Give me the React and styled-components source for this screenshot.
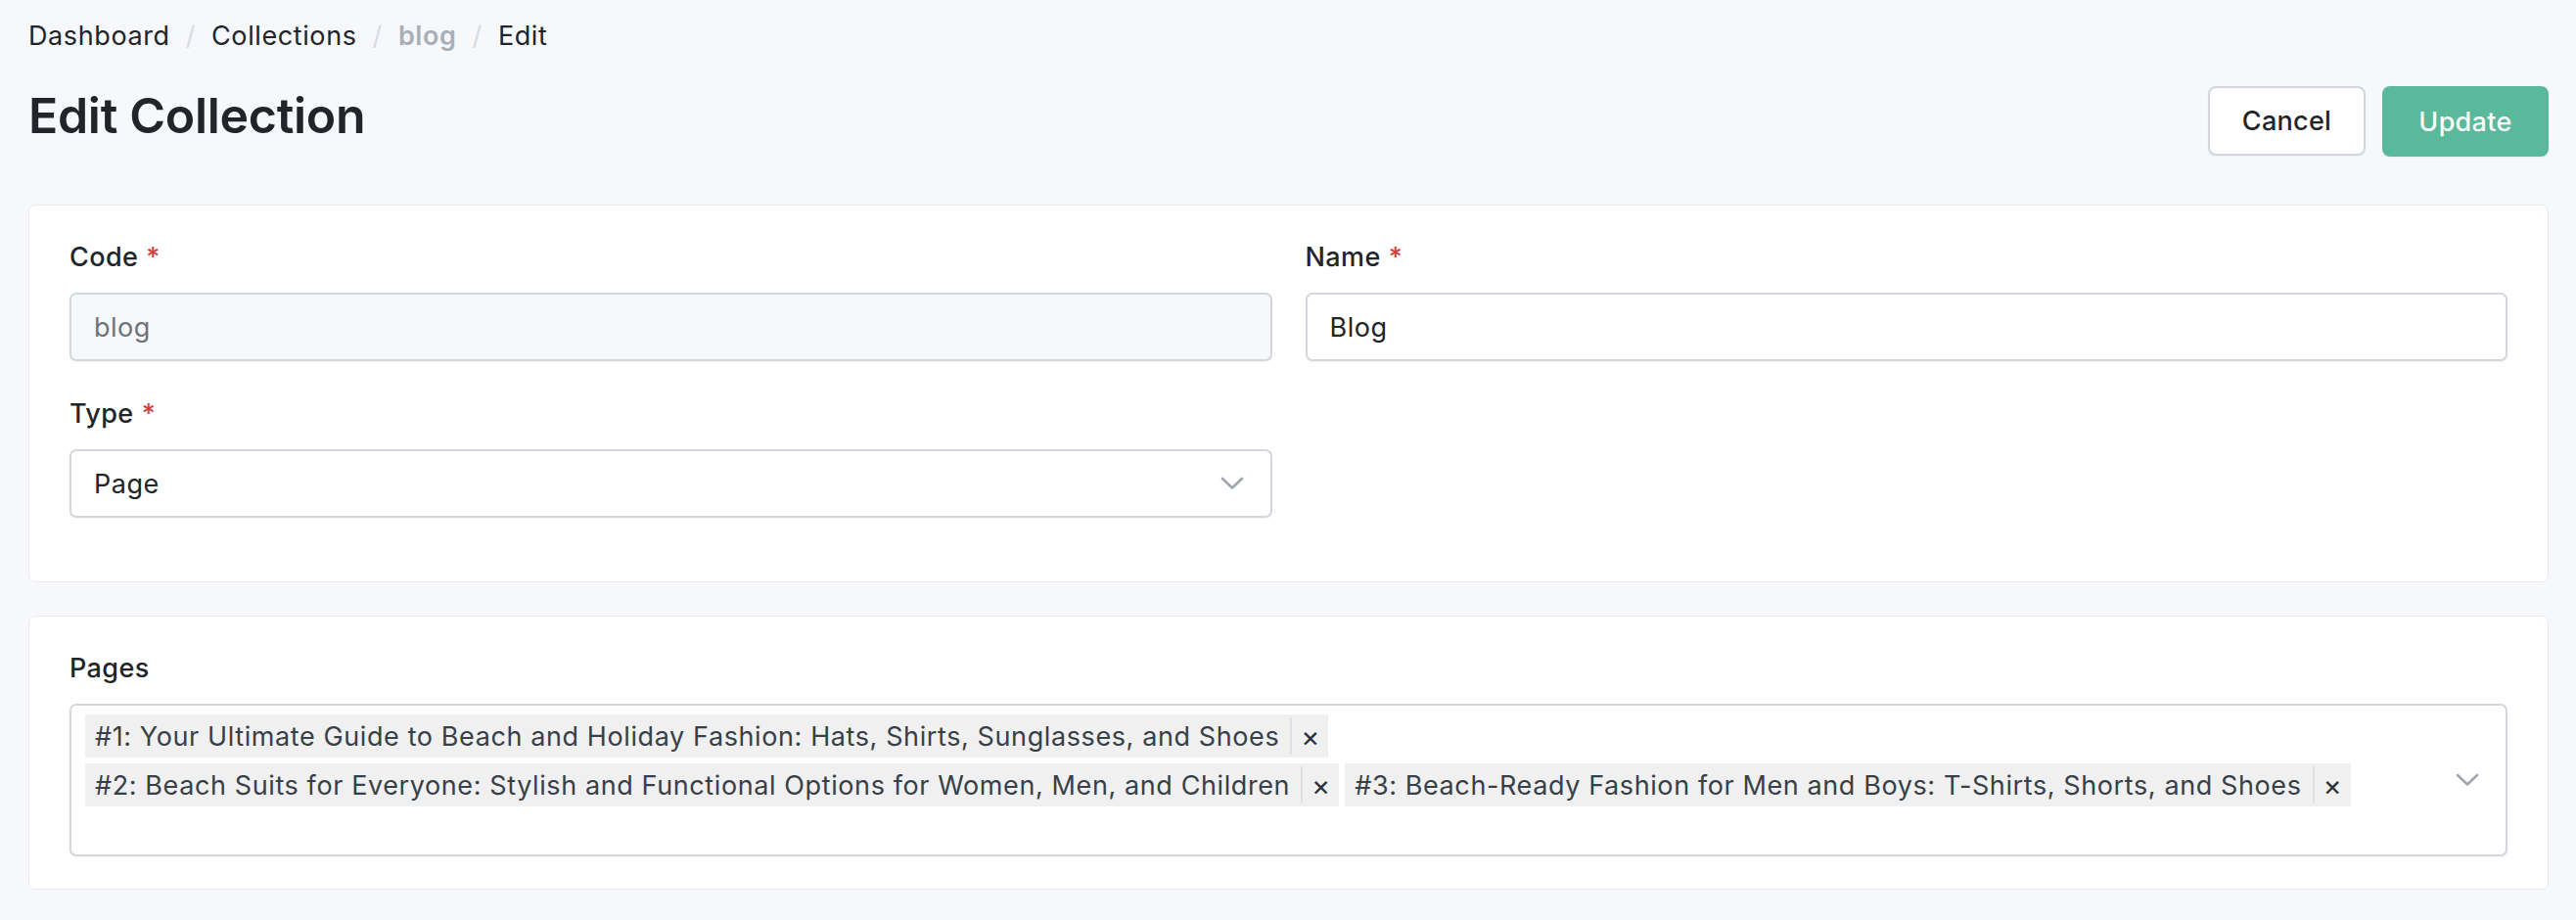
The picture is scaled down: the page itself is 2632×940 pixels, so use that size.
import React from 'react';
import styled, { createGlobalStyle } from 'styled-components';

const GlobalStyle = createGlobalStyle`
	* {
		box-sizing: border-box;
	}
	body {
		margin: 0;
		background: #f7f8fb;
		font-family: Inter, 'Noto Sans', sans-serif;
		color: #212529;
	}
`;

const Page = styled.main`
	padding: 20px 28px 31px 29px;
	min-height: 940px;
`;

const Breadcrumb = styled.nav`
	display: flex;
	align-items: center;
	font-size: 27px;
	line-height: 33px;
	letter-spacing: 0.6px;
`;

const Crumb = styled.span`
	color: ${(props) => (props.$muted ? '#a8afb8' : '#212529')};
	font-weight: ${(props) => (props.$muted ? 600 : 400)};
`;

const Slash = styled.span`
	color: #d8dce1;
	margin: 0 16px;
`;

const Header = styled.header`
	display: flex;
	justify-content: space-between;
	align-items: flex-start;
	margin-top: 35px;
	margin-bottom: 49px;
`;

const Title = styled.h1`
	margin: 0;
	font-size: 50px;
	line-height: 60px;
	font-weight: 600;
	color: #212529;
	letter-spacing: -0.3px;
`;

const Actions = styled.div`
	display: flex;
	gap: 17px;
	align-items: flex-start;
`;

const Button = styled.button`
	height: ${(props) => (props.$primary ? '72px' : '71px')};
	min-width: ${(props) => (props.$primary ? '170px' : '161px')};
	padding: 0 28px;
	border-radius: 8px;
	font-family: inherit;
	font-size: 27px;
	font-weight: 500;
	letter-spacing: 0.3px;
	cursor: pointer;
	border: ${(props) => (props.$primary ? 'none' : '2px solid #d3d7dd')};
	background: ${(props) => (props.$primary ? '#5ab89b' : '#fff')};
	color: ${(props) => (props.$primary ? '#f7fcfa' : '#212529')};
	box-shadow: 0 1px 2px rgba(0, 0, 0, 0.05);
`;

const Card = styled.section`
	background: #fff;
	border: 1px solid #e6e8ec;
	border-radius: 7px;
	padding: 38px 41px ${(props) => props.$padBottom || '33px'};
	margin-bottom: 34px;
`;

const Grid = styled.div`
	display: grid;
	grid-template-columns: 1fr 1fr;
	column-gap: 34px;
	row-gap: 39px;
`;

const Field = styled.div`
	display: flex;
	flex-direction: column;
`;

const Label = styled.label`
	font-size: 27px;
	line-height: 30px;
	font-weight: 500;
	letter-spacing: 0.4px;
	color: #212529;
	margin-bottom: 21px;
`;

const Required = styled.span`
	color: #d2413a;
	margin-left: 8px;
`;

const Input = styled.input`
	height: 70px;
	width: 100%;
	padding: 0 23px;
	border: 2px solid #d3d7dd;
	border-radius: 7px;
	font-family: inherit;
	font-size: 27px;
	letter-spacing: 0.5px;
	color: ${(props) => (props.disabled ? '#6c737d' : '#212529')};
	background: ${(props) => (props.disabled ? '#f7f8fa' : '#fff')};
	box-shadow: 0 1px 2px rgba(0, 0, 0, 0.05);
	outline: none;
`;

const SelectBox = styled.div`
	display: flex;
	align-items: center;
	justify-content: space-between;
	min-height: ${(props) => (props.$multi ? '156px' : '70px')};
	padding: ${(props) => (props.$multi ? '9px 27px 9px 14px' : '0 27px 0 23px')};
	border: 2px solid #d3d7dd;
	border-radius: 7px;
	background: #fff;
	font-size: 27px;
	letter-spacing: 0.5px;
	color: #212529;
	box-shadow: 0 1px 2px rgba(0, 0, 0, 0.05);
`;

const TagList = styled.div`
	flex: 1;
	align-self: stretch;
	display: flex;
	flex-wrap: wrap;
	align-content: flex-start;
	gap: 6px;
`;

const Tag = styled.span`
	display: inline-flex;
	align-items: stretch;
	height: 44px;
	background: #f0f0f0;
	color: #374048;
	font-size: 27px;
	letter-spacing: 0.6px;
`;

const TagText = styled.span`
	display: flex;
	align-items: center;
	padding: 0 11px 0 10px;
`;

const TagRemove = styled.span`
	display: flex;
	align-items: center;
	justify-content: center;
	width: 39px;
	margin: 3px 0;
	border-left: 2px solid #dde1e6;
	font-size: 29px;
	letter-spacing: 0;
	color: #2b3138;
`;

const Chevron = () => (
	<svg width='24' height='14' viewBox='0 0 24 14' fill='none'>
		<path d='M2 2 L12 11.5 L22 2' stroke='#a0a6ae' strokeWidth='2.6' strokeLinecap='round' strokeLinejoin='round' />
	</svg>
);

const pages = [
	'#1: Your Ultimate Guide to Beach and Holiday Fashion: Hats, Shirts, Sunglasses, and Shoes',
	'#2: Beach Suits for Everyone: Stylish and Functional Options for Women, Men, and Children',
	'#3: Beach-Ready Fashion for Men and Boys: T-Shirts, Shorts, and Shoes',
];

const App = () => {
	return (
		<Page>
			<GlobalStyle />
			<Breadcrumb>
				<Crumb>Dashboard</Crumb>
				<Slash>/</Slash>
				<Crumb>Collections</Crumb>
				<Slash>/</Slash>
				<Crumb $muted>blog</Crumb>
				<Slash>/</Slash>
				<Crumb>Edit</Crumb>
			</Breadcrumb>

			<Header>
				<Title>Edit Collection</Title>
				<Actions>
					<Button>Cancel</Button>
					<Button $primary>Update</Button>
				</Actions>
			</Header>

			<Card $padBottom='65px'>
				<Grid>
					<Field>
						<Label>
							Code<Required>*</Required>
						</Label>
						<Input value='blog' disabled readOnly />
					</Field>
					<Field>
						<Label>
							Name<Required>*</Required>
						</Label>
						<Input value='Blog' readOnly />
					</Field>
					<Field>
						<Label>
							Type<Required>*</Required>
						</Label>
						<SelectBox>
							<span>Page</span>
							<Chevron />
						</SelectBox>
					</Field>
				</Grid>
			</Card>

			<Card>
				<Field>
					<Label>Pages</Label>
					<SelectBox $multi>
						<TagList>
							{pages.map((p) => (
								<Tag key={p}>
									<TagText>{p}</TagText>
									<TagRemove>×</TagRemove>
								</Tag>
							))}
						</TagList>
						<Chevron />
					</SelectBox>
				</Field>
			</Card>
		</Page>
	);
};

export default App;
